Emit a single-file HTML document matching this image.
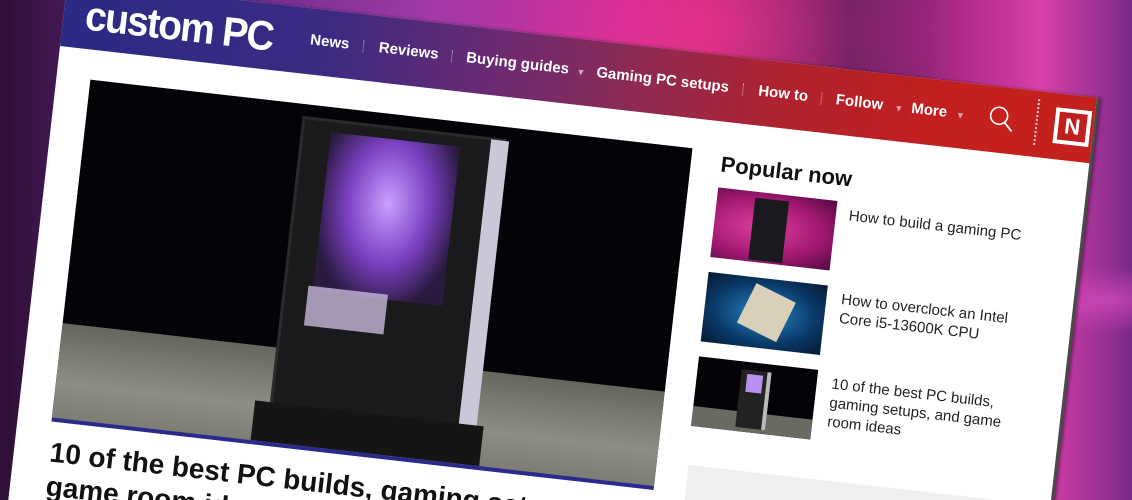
<!DOCTYPE html>
<html><head><meta charset="utf-8"><style>
*{margin:0;padding:0;box-sizing:border-box}
html,body{width:1132px;height:500px;overflow:hidden}
body{position:relative;font-family:"Liberation Sans",Arial,sans-serif;
background:linear-gradient(90deg,#2c0f36 0%,#4a1a5c 7%,#6a2a86 20%,#a03aa8 38%,#d02c98 55%,#c82a7c 62%,#5a1c5a 75%,#b02a88 85%,#d840a8 92%,#7a2a8a 100%);}
.bgglow{position:absolute;left:0;top:0;width:1132px;height:500px;background:radial-gradient(ellipse at 720px 30px,rgba(255,60,150,.5),transparent 220px),radial-gradient(ellipse at 1110px 300px,rgba(230,80,200,.6),transparent 120px)}
.pg{position:absolute;left:60px;top:46px;transform-origin:0 0;transform:rotate(6.5deg);width:1036px;height:700px}
.card{position:absolute;left:0;top:-66px;width:1036px;height:760px;background:#fff;box-shadow:3px 0 0 #4a4a4a,5px 0 3px rgba(0,0,0,.4)}
.hdr{position:absolute;left:0;top:-66px;width:1036px;height:66px;background:linear-gradient(90deg,#2b2a84 0%,#3a2a82 25%,#6a2a72 42%,#8c2a55 55%,#b0222e 70%,#c2201e 85%,#c4201e 100%)}
.logo{position:absolute;left:22px;top:-56px;font:900 36px/40px "Liberation Sans",Arial,sans-serif;color:#fff;letter-spacing:-1.5px;transform:scale(1.08,1.15);transform-origin:0 0}
.nav{position:absolute;top:-43px;color:#fff;font-weight:bold;font-size:15px;line-height:18px;white-space:nowrap}
.sep{position:absolute;top:-40px;width:2px;height:12px;border-left:1px dotted rgba(255,255,255,.6)}
.arr{position:absolute;top:-38px;color:rgba(255,255,255,.6);font-size:9px}
.img{position:absolute;background:#050208;overflow:hidden}
.side{position:absolute;font-size:15px;line-height:19px;color:#222}
</style></head><body>
<div class="bgglow"></div>
<div class="pg">
 <div class="card"></div>
 <div class="hdr"></div>
 <div class="logo">custom PC</div>
 <div class="nav" style="left:248px">News</div>
 <div class="sep" style="left:301px"></div>
 <div class="nav" style="left:317px">Reviews</div>
 <div class="sep" style="left:390px"></div>
 <div class="nav" style="left:405px">Buying guides</div>
 <div class="arr" style="left:516px">▼</div>
 <div class="nav" style="left:536px">Gaming PC setups</div>
 <div class="sep" style="left:683px"></div>
 <div class="nav" style="left:699px">How to</div>
 <div class="sep" style="left:762px"></div>
 <div class="nav" style="left:777px">Follow</div>
 <div class="arr" style="left:836px">▼</div>
 <div class="nav" style="left:853px">More</div>
 <div class="arr" style="left:898px">▼</div>
 <svg style="position:absolute;left:930px;top:-48px" width="28" height="28" viewBox="0 0 28 28"><circle cx="11" cy="11" r="8.5" fill="none" stroke="#fff" stroke-width="1.6"/><line x1="17" y1="17" x2="25" y2="25" stroke="#fff" stroke-width="1.8"/></svg>
 <div style="position:absolute;left:978px;top:-58px;height:46px;border-left:2px dotted rgba(255,255,255,.8)"></div>
 <div style="position:absolute;left:997px;top:-52px;width:36px;height:36px;border:4px solid #fff;background:#c2201e;color:#fff;font:900 22px/28px 'Liberation Sans',Arial,sans-serif;text-align:center">N</div>

 <div class="img" style="left:34px;top:30px;width:606px;height:340px">
  <div style="position:absolute;left:0;top:245px;width:606px;height:100px;background:linear-gradient(180deg,#66665e,#8e8e86 60%,#7a7a72)"></div>
  <div style="position:absolute;left:215px;top:12px;width:205px;height:295px;background:#1a1a1c;border:3px solid #2a2a2a"></div>
  <div style="position:absolute;left:405px;top:14px;width:18px;height:290px;background:#c8c8d8"></div>
  <div style="position:absolute;left:245px;top:25px;width:130px;height:160px;background:radial-gradient(ellipse at 50% 40%,#c8a0ff,#7a40c0 45%,#2a1a40 80%)"></div>
  <div style="position:absolute;left:240px;top:180px;width:80px;height:40px;background:#c8b8d8;opacity:.8"></div>
  <div style="position:absolute;left:200px;top:300px;width:230px;height:40px;background:#151515"></div>
 </div>
 <div style="position:absolute;left:34px;top:370px;width:606px;height:4px;background:#2a2a8c"></div>
 <div style="position:absolute;left:36px;top:388px;width:660px;font-weight:bold;font-size:28px;line-height:34px;color:#111">10 of the best PC builds, gaming setups, and game room ideas</div>

 <div style="position:absolute;left:670px;top:30px;font-weight:bold;font-size:22px;color:#111">Popular now</div>
 <div class="img" style="left:670px;top:66px;width:120px;height:70px;background:radial-gradient(ellipse at 40% 50%,#e040a0,#a01870 60%,#500a40)"><div style="position:absolute;left:38px;top:6px;width:34px;height:62px;background:#1a1a1e"></div></div>
 <div class="side" style="left:803px;top:70px">How to build a gaming PC</div>
 <div class="img" style="left:670px;top:151px;width:120px;height:70px;background:radial-gradient(ellipse at 50% 50%,#2a8ac8,#0a3a6a 60%,#051a30)"><div style="position:absolute;left:40px;top:12px;width:44px;height:44px;background:#d8d0b8;transform:rotate(20deg)"></div></div>
 <div class="side" style="left:805px;top:154px;width:190px">How to overclock an Intel Core i5-13600K CPU</div>
 <div class="img" style="left:670px;top:236px;width:120px;height:70px"><div style="position:absolute;left:0;top:50px;width:120px;height:20px;background:#6a6a62"></div><div style="position:absolute;left:44px;top:8px;width:30px;height:58px;background:#222;border-right:4px solid #bbb"></div><div style="position:absolute;left:50px;top:12px;width:16px;height:18px;background:#b890f0"></div></div>
 <div class="side" style="left:805px;top:239px;width:190px">10 of the best PC builds, gaming setups, and game room ideas</div>
 <div style="position:absolute;left:672px;top:345px;width:340px;height:300px;background:#efefef"></div>
</div>
</body></html>
